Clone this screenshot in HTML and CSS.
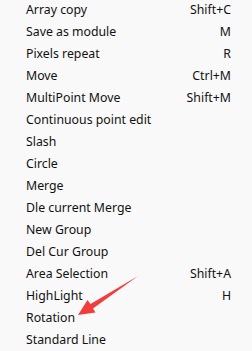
FILE: index.html
```html
<!DOCTYPE html>
<html lang="en">
<head>
    <meta charset="UTF-8">
    <meta name="viewport" content="width=device-width, initial-scale=1.0">
    <title>Context Menu</title>
    <link rel="stylesheet" href="styles.css">
</head>
<body>
    <ul class="menu">
        <li class="item"><span>Array copy</span><span class="key">Shift+C</span></li>
        <li class="item"><span>Save as module</span><span class="key">M</span></li>
        <li class="item"><span>Pixels repeat</span><span class="key">R</span></li>
        <li class="item"><span>Move</span><span class="key">Ctrl+M</span></li>
        <li class="item"><span>MultiPoint Move</span><span class="key">Shift+M</span></li>
        <li class="item"><span>Continuous point edit</span></li>
        <li class="item"><span>Slash</span></li>
        <li class="item"><span>Circle</span></li>
        <li class="item"><span>Merge</span></li>
        <li class="item"><span>Dle current Merge</span></li>
        <li class="item"><span>New Group</span></li>
        <li class="item"><span>Del Cur Group</span></li>
        <li class="item"><span>Area Selection</span><span class="key">Shift+A</span></li>
        <li class="item"><span>HighLight</span><span class="key">H</span></li>
        <li class="item"><span>Rotation</span></li>
        <li class="item"><span>Standard Line</span></li>
    </ul>
    <svg class="arrow" width="252" height="351" viewBox="0 0 252 351">
        <polygon points="78,315 87.5,300 90.5,304 138,276 93,308.5 95.5,312.5" fill="#f23d3d"/>
    </svg>
</body>
</html>
```

FILE: styles.css
```css
body {
    margin: 0;
    padding: 0;
    background-color: #f9f9f9;
    font-family: "Noto Sans", "Open Sans", sans-serif;
    font-size: 12.3px;
    color: #111;
    overflow: hidden;
}
.menu {
    list-style: none;
    margin: -2px 0 0 0;
    padding: 0 21px 0 26px;
}
.item {
    display: flex;
    justify-content: space-between;
    align-items: center;
    height: 22px;
    white-space: nowrap;
}
.arrow {
    position: absolute;
    left: 0;
    top: 0;
}
```
